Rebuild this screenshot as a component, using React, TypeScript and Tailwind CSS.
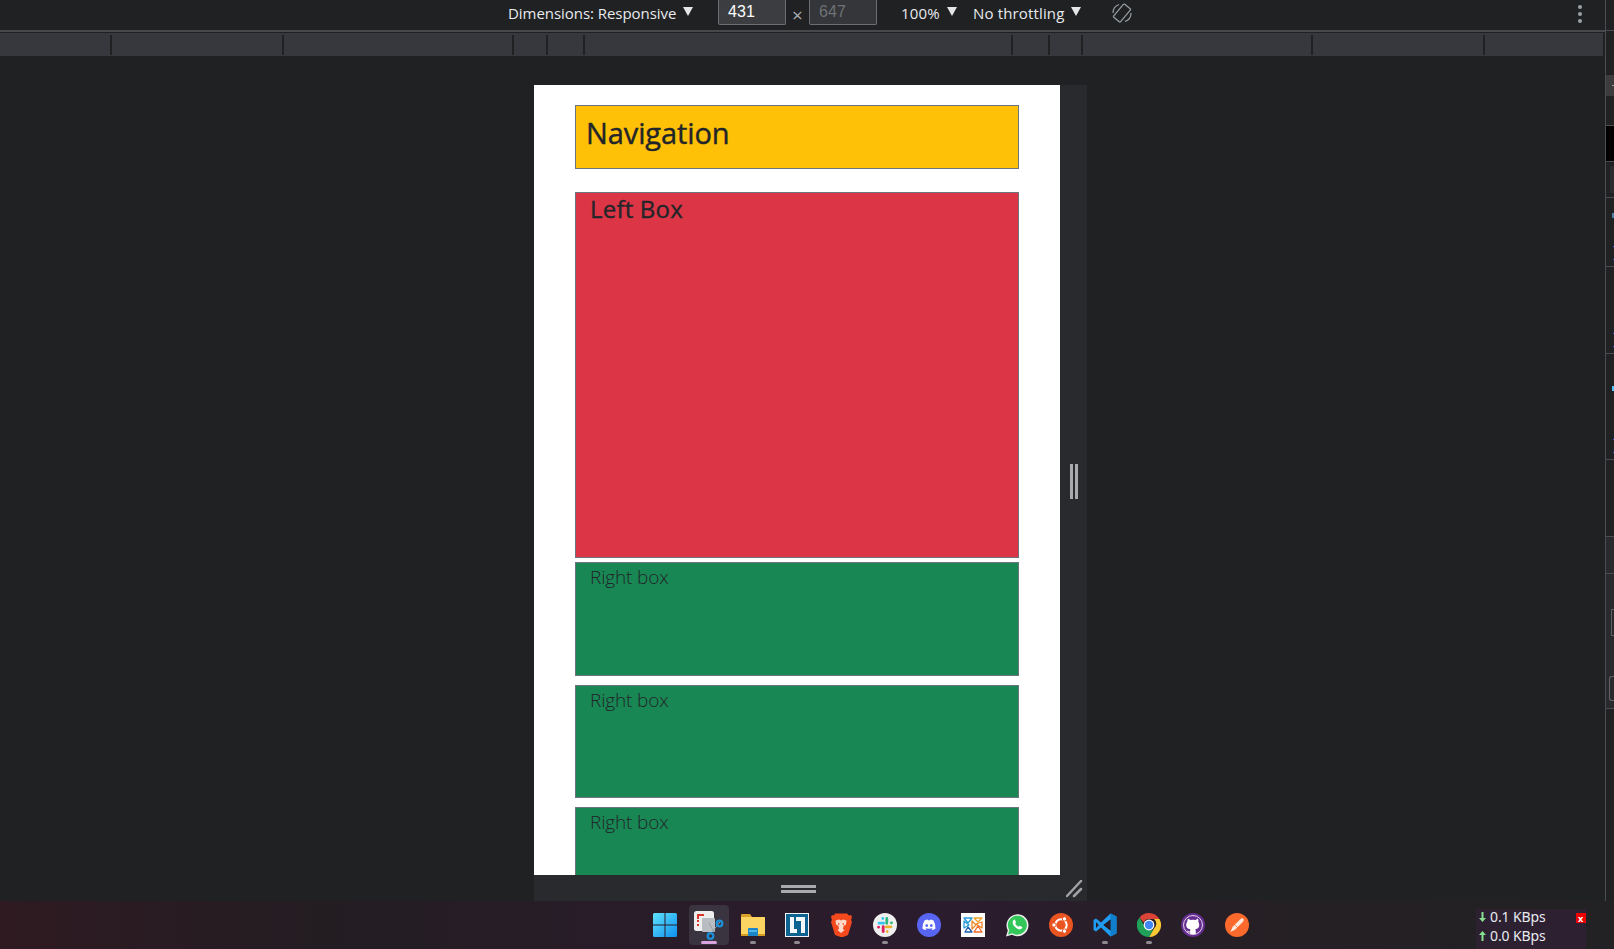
import React from "react";

const Tri = () => (
  <svg width="10" height="10" viewBox="0 0 10 10" className="shrink-0">
    <path d="M0 1h10L5 10z" fill="#e4e6e8" />
  </svg>
);

const Windows = () => (
  <svg width="24" height="24" viewBox="0 0 24 24">
    <defs>
      <linearGradient id="w" x1="0" y1="0" x2="1" y2="1">
        <stop offset="0" stopColor="#5fe3fb" />
        <stop offset="1" stopColor="#0f8ff0" />
      </linearGradient>
    </defs>
    <path d="M0 1.5Q0 0 1.5 0H11.5V11.5H0zM12.500 0H22.500Q24 0 24 1.500V11.500H12.500zM0 12.500H11.500V24H1.500Q0 24 0 22.500zM12.500 12.500H24V22.500Q24 24 22.500 24H12.500z" fill="url(#w)" />
  </svg>
);

const Snip = () => (
  <svg width="30" height="30" viewBox="0 0 30 30">
    <rect x="0" y="1" width="20" height="20" rx="2.500" fill="#eeeeee" />
    <rect x="8" y="8" width="13" height="14" rx="1" fill="#b9bcc0" />
    <path d="M3 4h7v2H5v2H3zM3 10h2v2H3zM3 14h2v2H3z" fill="#d9362b" />
    <rect x="6" y="4" width="2" height="2" fill="#d9362b" />
    <rect x="3" y="7" width="2" height="2" fill="#d9362b" />
    <path d="M18 22 L26 12 M15 13 L20 22" stroke="#9aa0a6" strokeWidth="1" />
    <circle cx="25.500" cy="13.500" r="2.800" fill="none" stroke="#1d8fd8" strokeWidth="2.200" />
    <circle cx="16.500" cy="26" r="2.800" fill="none" stroke="#1d8fd8" strokeWidth="2.200" />
  </svg>
);

const Folder = () => (
  <svg width="24" height="24" viewBox="0 0 24 24">
    <path d="M0 2q0-1 1-1h8l2 3h12q1 0 1 1v3H0z" fill="#d9a02a" />
    <rect x="0" y="4" width="24" height="19" rx="1" fill="#fcd462" />
    <rect x="0" y="21" width="24" height="2" fill="#d49b23" />
    <rect x="7" y="15" width="10" height="8" rx="1" fill="#1a86c9" />
    <rect x="8" y="17" width="8" height="2" fill="#4fb5e8" />
  </svg>
);

const LBox = () => (
  <svg width="24" height="24" viewBox="0 0 24 24">
    <rect width="24" height="24" fill="#f2f6f8" />
    <rect x="1" y="1" width="22" height="22" fill="#0c6291" />
    <path d="M5 4h4v12h3v4H5z" fill="#f4f8fa" />
    <path d="M11 4h9v16h-4V8h-5z" fill="#f4f8fa" />
  </svg>
);

const Brave = () => (
  <svg width="24" height="24" viewBox="0 0 24 24">
    <path d="M6 0.500h12l2 2 2-.500 1 2-1 3 1 2-4 13-6 2.500L6 22 2 9l1-2-1-3 1-2 2 .5z" fill="#f4491c" />
    <path d="M6.500 7.500l3.500-1 2 1 2-1 3.500 1-.5 4-2.500 1.500-.5 3 1.500 1-3.500 3-3.500-3 1.500-1-.5-3-2.500-1.500z" fill="#ffd9c9" />
    <path d="M9 10l2 1-2 1zM15 10l-2 1 2 1z" fill="#f4491c" />
  </svg>
);

const Slack = () => (
  <svg width="24" height="24" viewBox="0 0 24 24">
    <circle cx="12" cy="12" r="12" fill="#efefef" />
    <g strokeWidth="2.800" strokeLinecap="round" fill="none">
      <path d="M6 10.200h4.800M9.800 5.500v.1" stroke="#36c5f0" />
      <path d="M13.800 5.500v4.800M18.500 9.800h-.1" stroke="#2eb67d" />
      <path d="M18 13.800h-4.800M14.200 18.500v-.1" stroke="#ecb22e" />
      <path d="M10.200 18.500v-4.800M5.500 14.200h.1" stroke="#e01e5a" />
    </g>
  </svg>
);

const Discord = () => (
  <svg width="24" height="24" viewBox="0 0 24 24">
    <circle cx="12" cy="12" r="12" fill="#5865f2" />
    <path d="M7.500 7.500q2-1 3-1l.4.800q1.100-.2 2.200 0l.4-.8q1 0 3 1 2.200 3.500 2 8-1.500 1.200-3.200 1.500l-.8-1.200q.8-.2 1.300-.6-.3-.2-.3-.2-3.500 1.500-7 0l-.3.200q.5.400 1.300.6l-.8 1.200Q6.900 16.700 5.400 15.500q-.2-4.500 2.100-8z" fill="#fff" />
    <ellipse cx="9.700" cy="12.500" rx="1.300" ry="1.500" fill="#5865f2" />
    <ellipse cx="14.300" cy="12.500" rx="1.300" ry="1.500" fill="#5865f2" />
  </svg>
);

const Zoho = () => (
  <svg width="24" height="24" viewBox="0 0 24 24">
    <rect width="24" height="24" fill="#fff" />
    <g fill="none" strokeWidth="1.300" strokeLinejoin="round">
      <path d="M3 5l8 0-4 5z" stroke="#2a9ad6" />
      <path d="M3 8l5 4-5 3z" stroke="#2a9ad6" />
      <path d="M7 14l4 5-7 0z" stroke="#1b5fae" />
      <path d="M13 5l8 0-4 4z" stroke="#f0a12a" />
      <path d="M15 11l6-2v6z" stroke="#f0812a" />
      <path d="M13 19l4-6 4 6z" stroke="#f06a2a" />
      <path d="M11 8l4 4-4 4z" stroke="#e88a2a" />
    </g>
  </svg>
);

const Whatsapp = () => (
  <svg width="24" height="24" viewBox="0 0 24 24">
    <path d="M1 23.500l1.800-6A11 11 0 1 1 7 21.800z" fill="#eeeeee" />
    <path d="M3 21.500l1.300-4.300A9.500 9.500 0 1 1 7.300 20.200z" fill="#33c75a" />
    <path d="M8.500 7q1-.800 1.500 0l1 2.200-.8 1.300q1 2.200 3.300 3.300l1.300-1 2.300 1.100q.5.900-.3 1.700-1.500 1.400-4 .3-4-1.800-5-5.300-.4-2 .7-3.600z" fill="#fff" />
  </svg>
);

const Ubuntu = () => (
  <svg width="24" height="24" viewBox="0 0 24 24">
    <circle cx="12" cy="12" r="12" fill="#e95420" />
    <circle cx="12" cy="12" r="5.700" fill="none" stroke="#fff" strokeWidth="2" />
    <circle cx="5" cy="12" r="2.200" fill="#fff" stroke="#e95420" />
    <circle cx="15.500" cy="5.900" r="2.200" fill="#fff" stroke="#e95420" />
    <circle cx="15.500" cy="18.100" r="2.200" fill="#fff" stroke="#e95420" />
  </svg>
);

const VSCode = () => (
  <svg width="24" height="24" viewBox="0 0 24 24">
    <path d="M17.500 0.500L23.500 3.500V20.500L17.500 23.500 8 14.500 3 18.500 0.500 17V7L3 5.500 8 9.500zM17.500 6.500L10.500 12l7 5.500zM3 9v6l3-3z" fill="#1f9cf0" />
    <path d="M17.500 0.500L23.500 3.500V20.500L17.500 23.500z" fill="#0f7fcc" />
    <path d="M17.500 6.500v11l-7-5.500z" fill="#241b26" />
  </svg>
);

const Chrome = () => (
  <svg width="24" height="24" viewBox="0 0 24 24">
    <path d="M12 0a12 12 0 0 1 10.400 6H12a6 6 0 0 0-5.400 3.400L2.500 4.500A12 12 0 0 1 12 0z" fill="#db4437" />
    <path d="M22.400 6A12 12 0 0 1 12 24l5-8.500a6 6 0 0 0 0-9.500z" fill="#fcc934" />
    <path d="M2.500 4.500l4.500 8a6 6 0 0 0 9.500 3.500L12 24A12 12 0 0 1 2.500 4.500z" fill="#1fa15a" />
    <circle cx="12" cy="12" r="5.400" fill="#fff" />
    <circle cx="12" cy="12" r="4.200" fill="#4285f4" />
  </svg>
);

const Github = () => (
  <svg width="24" height="24" viewBox="0 0 24 24">
    <circle cx="12" cy="12" r="12" fill="#662d91" />
    <circle cx="12" cy="12" r="9.500" fill="none" stroke="#fff" strokeWidth="0.800" />
    <path d="M7 5.500l2.500 1.500q2.500-.700 5 0L17 5.500q.8 2 .3 3.500 1 1.200.9 3 0 3.700-4 4.300.6.600.6 1.700V21h-5.600v-1.500q-2.500.5-3.400-2l1.800.8q1 .6 1.600-.1V16.300q-4-.6-4-4.300 0-1.800.9-3Q6.300 7.500 7 5.500z" fill="#fff" />
  </svg>
);

const Paper = () => (
  <svg width="24" height="24" viewBox="0 0 24 24">
    <circle cx="12" cy="12" r="12" fill="#fb6a2c" />
    <path d="M5.500 19l2-5 8-8q2-1.500 3 0 .8 1.300-.5 2.700l-8 8z" fill="#ffe9de" />
    <path d="M10 12l3 3" stroke="#fb6a2c" strokeWidth="0.800" />
  </svg>
);

const DownArrow = () => (
  <svg width="7" height="10" viewBox="0 0 7 10" className="mr-[4px] shrink-0">
    <path d="M2.500 0h2v6H7L3.500 10 0 6h2.500z" fill="#86e08f" />
  </svg>
);

const UpArrow = () => (
  <svg width="7" height="10" viewBox="0 0 7 10" className="mr-[4px] shrink-0">
    <path d="M2.500 10h2V4H7L3.500 0 0 4h2.500z" fill="#86e08f" />
  </svg>
);

const apps = [
  { el: <Windows />, dot: "" },
  { el: <Snip />, dot: "active" },
  { el: <Folder />, dot: "on" },
  { el: <LBox />, dot: "on" },
  { el: <Brave />, dot: "" },
  { el: <Slack />, dot: "on" },
  { el: <Discord />, dot: "" },
  { el: <Zoho />, dot: "" },
  { el: <Whatsapp />, dot: "" },
  { el: <Ubuntu />, dot: "" },
  { el: <VSCode />, dot: "on" },
  { el: <Chrome />, dot: "on" },
  { el: <Github />, dot: "" },
  { el: <Paper />, dot: "" },
];

const rulerSegments = [112, 172, 230, 34, 37, 428, 37, 33, 230, 172];

const RightBox = ({ h }: { h: string }) => (
  <div className={`shrink-0 border border-[#6c757d] bg-[#198754] pl-[14px] pt-px text-[19px] leading-[27px] font-light text-[#212529] tracking-[-0.15px] ${h}`}>
    Right box
  </div>
);

const Rule = () => <div className="h-px shrink-0 bg-[#494c50]" />;

export default function App() {
  return (
    <div className="flex h-[949px] w-[1614px] flex-col overflow-hidden bg-[#202123] font-['Open_Sans',sans-serif]">
      <div className="flex h-[901px] shrink-0">
        <div className="flex w-[1605px] shrink-0 flex-col">
          <div className="flex h-[30px] shrink-0 items-center pl-[508px] text-[15px] tracking-[0.15px] text-[#e8eaed]">
            <span className="mb-[4px] w-[170px] whitespace-nowrap tracking-[-0.05px]">Dimensions: Responsive</span>
            <span className="ml-[5px] mb-[8px]"><Tri /></span>
            <div className="ml-[25px] mb-[5px] flex h-[25px] w-[68px] items-center rounded-b-[2px] border border-t-0 border-[#6b6e72] bg-[#3c3d40] pl-[9px] font-['Liberation_Sans',sans-serif] text-[16px] text-white">431</div>
            <span className="ml-[6px] w-[11px] text-center text-[19px] leading-none text-[#a8acb0]">×</span>
            <div className="ml-[6px] mb-[5px] flex h-[25px] w-[68px] items-center rounded-b-[2px] border border-t-0 border-[#6b6e72] bg-[#35363a] pl-[9px] font-['Liberation_Sans',sans-serif] text-[16px] text-[#6e7175]">647</div>
            <span className="mb-[4px] ml-[24px] w-[39px]">100%</span>
            <span className="ml-[7px] mb-[8px]"><Tri /></span>
            <span className="mb-[4px] ml-[16px] w-[93px] whitespace-nowrap">No throttling</span>
            <span className="ml-[5px] mb-[8px]"><Tri /></span>
            <svg width="20" height="20" viewBox="0 0 20 20" className="ml-[31px] mb-[4px]" fill="none" stroke="#9aa0a6" strokeWidth="1.200">
              <rect x="5.500" y="1.500" width="9" height="17" rx="1" transform="rotate(40 10 10)" />
              <path d="M1 10A9 9 0 0 1 7 1.500M19 10A9 9 0 0 1 13 18.500" />
            </svg>
            <div className="ml-[446px] mb-[2px] flex flex-col gap-[3px]">
              <span className="size-[4px] rounded-full bg-[#9aa0a6]" />
              <span className="size-[4px] rounded-full bg-[#9aa0a6]" />
              <span className="size-[4px] rounded-full bg-[#9aa0a6]" />
            </div>
          </div>
          <div className="h-[2px] shrink-0 bg-[#46484b]" />
          <div className="mt-px flex h-[23px] w-[1603px] shrink-0 items-center bg-[#36383d]">
            {rulerSegments.map((w, i) => (
              <div key={i} style={{ width: w }} className="h-[20px] shrink-0 border-r-2 border-[#202123]" />
            ))}
          </div>
          <div className="flex flex-1 flex-col pl-[534px] pt-[29px]">
            <div className="flex h-[790px] w-[553px] shrink-0">
              <div className="flex h-full w-[526px] shrink-0 flex-col overflow-hidden bg-white px-[41px] pt-[20px]">
                <div className="flex h-[64px] shrink-0 items-center border border-[#6c757d] bg-[#ffc107] pb-[8px] pl-[10px] text-[29px] tracking-[-0.1px] text-[#212529] [-webkit-text-stroke:0.4px_#212529]">
                  Navigation
                </div>
                <div className="mt-[23px] h-[366px] shrink-0 border border-[#6c757d] bg-[#dc3545] pl-[14px] text-[24px] leading-[32px] tracking-[0.2px] text-[#212529] [-webkit-text-stroke:0.35px_#212529]">
                  Left Box
                </div>
                <div className="mt-[4px]"><RightBox h="h-[114px]" /></div>
                <div className="mt-[9px]"><RightBox h="h-[113px]" /></div>
                <div className="mt-[9px]"><RightBox h="h-[114px]" /></div>
              </div>
              <div className="flex w-[27px] shrink-0 items-center bg-[#292a2d] pt-[3px] pl-[10px]">
                <div className="flex h-[35px] gap-[2px]">
                  <span className="w-[3px] bg-[#a8aaad]" />
                  <span className="w-[3px] bg-[#a8aaad]" />
                </div>
              </div>
            </div>
            <div className="flex h-[26px] w-[553px] shrink-0 items-center bg-[#292a2d] pt-px">
              <div className="ml-[247px] flex w-[35px] shrink-0 flex-col gap-[2px]">
                <span className="h-[3px] bg-[#a8aaad]" />
                <span className="h-[3px] bg-[#a8aaad]" />
              </div>
              <svg width="17" height="18" viewBox="0 0 17 18" className="ml-[250px] shrink-0" stroke="#a0a2a5" strokeWidth="2.500" strokeLinecap="round">
                <path d="M1 16L15 1M8 16L15 9" />
              </svg>
            </div>
          </div>
        </div>
        <div className="flex w-[9px] shrink-0 flex-col border-l border-[#494c50]">
          <div className="h-[30px]" />
          <Rule />
          <div className="h-[44px]" />
          <div className="flex h-[21px] items-center justify-end bg-[#3c3c3c]"><span className="h-px w-[2px] bg-[#9aa0a6]" /></div>
          <div className="h-[29px]" />
          <Rule />
          <div className="h-[35px] bg-black" />
          <Rule />
          <div className="ml-[4px] mt-[4px] h-[27px] bg-[#2b2c2f]" />
          <div className="h-[4px]" />
          <Rule />
          <div className="h-[15px]" />
          <div className="ml-[6px] h-[5px] w-[2px] bg-[#4b7fa8]" />
          <div className="h-[28px]" />
          <div className="ml-[7px] h-px w-px bg-[#3b5cff]" />
          <div className="h-[12px]" />
          <div className="ml-[7px] h-px w-px bg-[#3b5cff]" />
          <div className="h-[6px]" />
          <Rule />
          <div className="h-[66px]" />
          <div className="ml-[7px] h-px w-px bg-[#3b5cff]" />
          <div className="h-[12px]" />
          <div className="ml-[7px] h-px w-px bg-[#3b5cff]" />
          <div className="h-[6px]" />
          <Rule />
          <div className="h-[32px]" />
          <div className="ml-[6px] h-[5px] w-[2px] bg-[#4fc3ff]" />
          <div className="h-[48px]" />
          <div className="ml-[7px] h-px w-px bg-[#3b5cff]" />
          <div className="h-[12px]" />
          <div className="ml-[7px] h-px w-px bg-[#3b5cff]" />
          <div className="h-[6px]" />
          <Rule />
          <div className="h-[76px]" />
          <Rule />
          <div className="h-[36px] bg-[#292a2d]" />
          <Rule />
          <div className="flex h-[134px] flex-col bg-[#292a2d]">
            <div className="ml-[5px] mt-[35px] h-[27px] rounded-l-[1px] border border-r-0 border-[#5f6165]" />
            <div className="ml-[3px] mt-[40px] h-[25px] rounded-l-[3px] border border-r-0 border-[#5f6165]" />
          </div>
          <Rule />
          <div className="flex-1" />
        </div>
      </div>
      <div className="flex h-[48px] shrink-0 items-center bg-[linear-gradient(90deg,#2e1a20_0%,#2a1b22_8%,#231d22_20%,#2a1c2a_45%,#2b1c2e_60%,#252024_80%,#222123_100%)] pl-[643px]">
        {apps.map((a, i) => (
          <div key={i} className={`flex h-[40px] shrink-0 flex-col items-center pt-[5px] ${a.dot === "active" ? "mx-[2px] w-[40px] rounded-[4px] bg-[#3a3340]" : "w-[44px]"}`}>
            <div className="flex h-[30px] w-[30px] items-center justify-center">{a.el}</div>
            <span className={`mt-px h-[3px] rounded-full ${a.dot === "active" ? "w-[16px] bg-[#d8a4e0]" : a.dot === "on" ? "w-[6px] bg-[#8f8a90]" : "w-[6px]"}`} />
          </div>
        ))}
        <div className="ml-[217px] flex h-[40px] w-[110px] shrink-0 self-end bg-[#2d2030] pl-[3px]">
          <div className="-mt-[2px] flex flex-col font-['Noto_Sans',sans-serif] text-[14px] leading-[19px] tracking-[-0.1px] text-[#e8eaf0]">
            <div className="flex items-center"><DownArrow />0.1 KBps</div>
            <div className="flex items-center"><UpArrow />0.0 KBps</div>
          </div>
          <div className="ml-[30px] mt-[4px] flex h-[10px] w-[10px] items-center justify-center bg-[#ee0000] text-[9px] leading-none font-bold text-white">x</div>
        </div>
      </div>
    </div>
  );
}
